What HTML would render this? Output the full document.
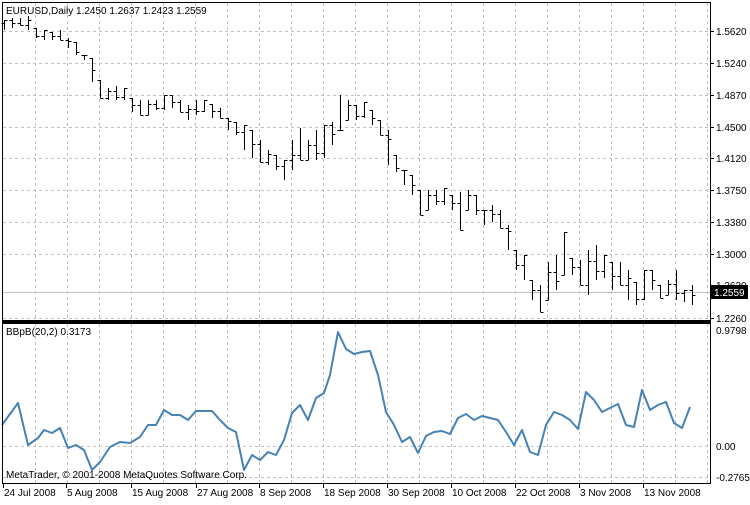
<!DOCTYPE html>
<html><head><style>
body{margin:0;background:#fff;width:750px;height:500px;overflow:hidden;font-family:"Liberation Sans",sans-serif;}
svg text{font-family:"Liberation Sans",sans-serif;font-size:10px;fill:#000}
</style></head><body>
<svg id="s" width="750" height="500" xmlns="http://www.w3.org/2000/svg">
<rect width="750" height="500" fill="#fff"/>
<g id="grid" stroke="#c0c0c0" stroke-dasharray="3,3" stroke-width="1"></g>
<line x1="2" y1="292.5" x2="710" y2="292.5" stroke="#c0c0c0"/>
<path id="bars" fill="none" stroke="#000" stroke-width="1"/>
<polyline id="ind" fill="none" stroke="#4682b4" stroke-width="2" stroke-linejoin="round"/>
<rect x="2.5" y="2.5" width="708" height="318" fill="none" stroke="#000"/>
<rect x="2.5" y="323.5" width="708" height="160" fill="none" stroke="#000"/>
<line x1="2" y1="322" x2="711" y2="322" stroke="#000" stroke-width="2"/>
<text x="6" y="14">EURUSD,Daily  1.2450 1.2637 1.2423 1.2559</text>
<text x="6" y="335">BBpB(20,2) 0.3173</text>
<text x="6" y="478">MetaTrader, © 2001-2008 MetaQuotes Software Corp.</text>
<g id="ax"></g>
<rect x="711" y="285" width="37" height="14" fill="#000"/>
<text x="714" y="296" style="fill:#fff">1.2559</text>
</svg>
<script>
var NS="http://www.w3.org/2000/svg",s=document.getElementById('s');
var g=document.getElementById('grid'),ax=document.getElementById('ax');
function el(p,t,a,tx){var e=document.createElementNS(NS,t);for(var k in a)e.setAttribute(k,a[k]);if(tx)e.textContent=tx;p.appendChild(e);return e;}
for(var x=35.5;x<710;x+=32){el(g,'line',{x1:x,y1:3,x2:x,y2:320});el(g,'line',{x1:x,y1:324,x2:x,y2:483});}
var py=[[31,'1.5620'],[63,'1.5240'],[95,'1.4870'],[127,'1.4500'],[158,'1.4120'],[190,'1.3750'],[222,'1.3380'],[254,'1.3000'],[318,'1.2260']];
py.forEach(function(p){el(g,'line',{x1:3,y1:p[0]+.5,x2:710,y2:p[0]+.5});el(ax,'line',{x1:710,y1:p[0]+.5,x2:714,y2:p[0]+.5,stroke:'#000'});el(ax,'text',{x:716,y:p[0]+4},p[1]);});
el(ax,'text',{x:716,y:289},'1.2620');
[[446,'0.00'],[477,'-0.2765']].forEach(function(p){el(g,'line',{x1:3,y1:p[0]+.5,x2:710,y2:p[0]+.5});el(ax,'text',{x:716,y:p[0]+4},p[1]);});
el(ax,'text',{x:716,y:334},'0.9798');
var dl=[[2,'24 Jul 2008'],[65,'5 Aug 2008'],[130,'15 Aug 2008'],[195,'27 Aug 2008'],[258,'8 Sep 2008'],[322,'18 Sep 2008'],[386,'30 Sep 2008'],[450,'10 Oct 2008'],[514,'22 Oct 2008'],[578,'3 Nov 2008'],[642,'13 Nov 2008']];
dl.forEach(function(d){el(ax,'line',{x1:d[0]+1.5,y1:484,x2:d[0]+1.5,y2:488,stroke:'#000'});el(ax,'text',{x:d[0]+2,y:496},d[1]);});
var r=[[20,30],[18,28],[18,25],[16,30],[28,38],[30,40],[32,40],[30,40],[38,48],[42,55],[55,60],[58,82],[80,98],[88,100],[86,100],[88,100],[98,112],[100,115],[100,115],[100,110],[95,110],[95,108],[100,112],[105,120],[100,115],[100,112],[104,118],[108,118],[118,130],[122,135],[125,150],[130,158],[140,162],[150,165],[155,170],[160,180],[140,170],[128,160],[140,160],[130,160],[125,158],[122,145],[95,130],[100,120],[105,120],[102,118],[110,125],[120,135],[130,165],[155,172],[170,185],[175,195],[190,215],[190,210],[190,205],[188,205],[195,210],[192,230],[190,210],[195,215],[210,225],[205,222],[210,228],[225,250],[250,270],[255,280],[280,300],[285,312],[262,300],[255,290],[232,275],[258,275],[260,285],[250,295],[245,280],[255,278],[262,290],[262,285],[270,300],[282,305],[270,300],[270,290],[285,298],[280,295],[270,300],[290,302],[285,305]];
var d='',prev=null;
r.forEach(function(b,i){var x=4.5+8*i,o=prev==null?b[0]+3:Math.min(Math.max(prev,b[0]),b[1]),c=b[0]+(b[1]-b[0])*((i*7%5)/4);
d+='M'+x+' '+b[0]+'V'+b[1]+'M'+(x-3)+' '+Math.round(o)+'.5H'+x+'M'+x+' '+Math.round(c)+'.5H'+(x+3);prev=c;});
document.getElementById('bars').setAttribute('d',d);
var ip=[2,425,18,403,28,445,38,438,44,430,52,433,60,428,68,448,76,445,84,450,92,470,100,462,110,447,120,442,130,443,140,437,148,425,156,425,164,410,172,415,180,415,188,420,196,411,212,411,220,420,228,428,236,432,244,470,252,455,260,460,268,452,276,455,284,440,292,413,300,405,308,420,316,398,324,393,330,375,338,332,346,349,354,354,362,352,370,351,378,375,386,412,394,425,402,442,410,437,418,453,426,436,434,432,442,431,450,434,458,418,466,414,474,420,482,416,490,418,498,420,506,432,514,445,522,430,530,452,538,455,546,425,554,412,562,415,570,420,578,429,586,392,594,400,602,412,610,408,618,404,626,425,634,427,642,390,650,410,658,405,666,402,674,423,682,428,690,407];
var pts='';for(var i=0;i<ip.length;i+=2)pts+=ip[i]+','+ip[i+1]+' ';
document.getElementById('ind').setAttribute('points',pts);
</script>
</body></html>
